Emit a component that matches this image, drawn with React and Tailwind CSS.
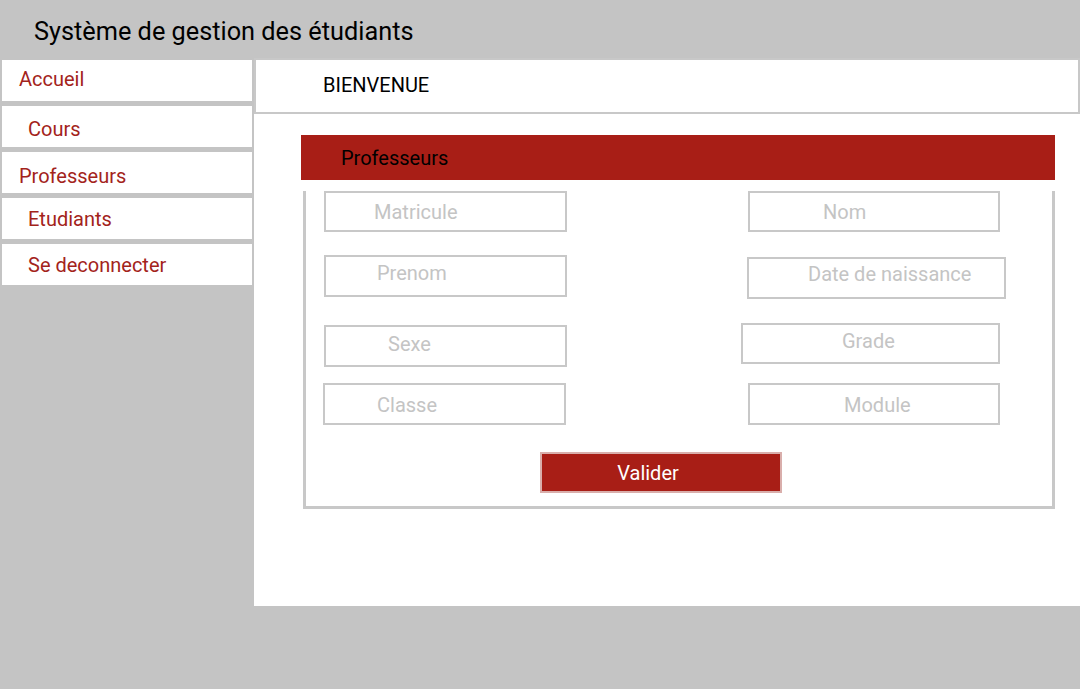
const navItems = [
  { label: 'Accueil', cls: 'pl-[17px] pb-[3px]' },
  { label: 'Cours', cls: 'pl-[26px] pt-[5px]' },
  { label: 'Professeurs', cls: 'pl-[17px] pt-[6px]' },
  { label: 'Etudiants', cls: 'pl-[26px]' },
  { label: 'Se deconnecter', cls: 'pl-[26px]' },
];

function Field({ label, className }) {
  return (
    <div
      className={`flex items-center border-2 border-[#c8c8c8] bg-white text-[20px] text-[#c4c4c4] ${className}`}
    >
      {label}
    </div>
  );
}

export default function App() {
  return (
    <div className="w-[1080px] h-[689px] bg-[#c4c4c4] font-['Roboto',sans-serif] flex flex-col overflow-hidden">
      <header className="h-[58px] pl-[34px] pt-[6px] flex items-center text-[25.3px] text-black">
        Système de gestion des étudiants
      </header>

      <div className="flex items-start">
        <nav className="w-[254px] px-[2px] pt-[2px] flex flex-col gap-[5px]">
          {navItems.map((item) => (
            <div
              key={item.label}
              className={`h-[41px] bg-white flex items-center text-[20px] text-[#a3231b] ${item.cls}`}
            >
              {item.label}
            </div>
          ))}
        </nav>

        <main className="w-[826px] h-[548px] bg-white flex flex-col">
          <div className="h-[56px] border-2 border-[#c8c8c8] pl-[67px] pb-[2px] flex items-center text-[20px] text-black">
            BIENVENUE
          </div>

          <div className="pl-[47px] pt-[21px]">
            <div className="w-[754px] h-[45px] bg-[#a81e16] pl-[40px] flex items-center text-[20px] text-black">
              Professeurs
            </div>

            <div className="ml-[2px] w-[752px] border-[3px] border-t-0 border-[#c8c8c8] pb-[13px]">
              <div className="flex items-start mt-[11px]">
                <Field label="Matricule" className="ml-[18px] w-[243px] h-[41px] pl-[48px]" />
                <Field label="Nom" className="ml-[181px] w-[252px] h-[41px] pl-[73px]" />
              </div>

              <div className="flex items-start mt-[23px]">
                <Field label="Prenom" className="ml-[18px] w-[243px] h-[42px] pl-[51px] pb-[7px]" />
                <Field label="Date de naissance" className="ml-[180px] mt-[2px] w-[259px] h-[42px] pl-[59px] pb-[8px]" />
              </div>

              <div className="flex items-start mt-[24px]">
                <Field label="Sexe" className="ml-[18px] mt-[2px] w-[243px] h-[42px] pl-[62px] pb-[5px]" />
                <Field label="Grade" className="ml-[174px] w-[259px] h-[41px] pl-[99px] pb-[6px]" />
              </div>

              <div className="flex items-start mt-[16px]">
                <Field label="Classe" className="ml-[17px] w-[243px] h-[42px] pl-[52px] pt-[1px]" />
                <Field label="Module" className="ml-[182px] w-[252px] h-[42px] pl-[94px] pt-[1px]" />
              </div>

              <button className="mt-[27px] ml-[234px] w-[242px] h-[41px] bg-[#a81e16] border-2 border-[#d9aeab] flex items-center justify-center pr-[26px] text-[20px] text-white">
                Valider
              </button>
            </div>
          </div>
        </main>
      </div>
    </div>
  );
}
